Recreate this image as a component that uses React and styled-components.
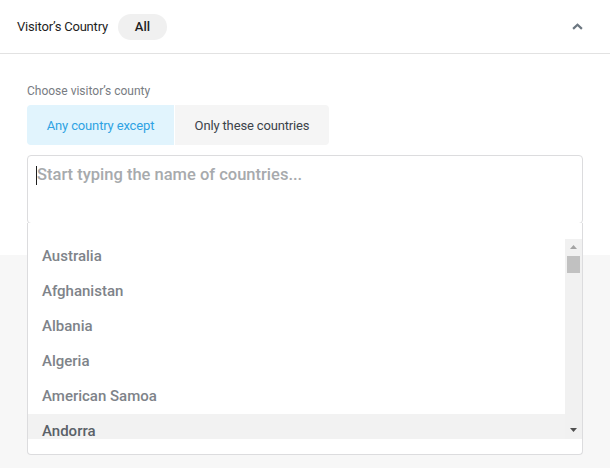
import styled, { createGlobalStyle } from "styled-components";

const GlobalStyle = createGlobalStyle`
    html, body {
        margin: 0;
        padding: 0;
        background: #f7f7f7;
        font-family: Roboto, "Liberation Sans", sans-serif;
    }
`;

const countries = [
    "Australia",
    "Afghanistan",
    "Albania",
    "Algeria",
    "American Samoa",
    "Andorra",
];

const App = () => {
    return (
        <Page>
            <GlobalStyle />
            <Panel>
                <Header>
                    <Title>Visitor’s Country</Title>
                    <Pill>All</Pill>
                    <Chevron viewBox="0 0 10 6">
                        <path d="M1 5.2 L5 1.4 L9 5.2" />
                    </Chevron>
                </Header>
                <Body>
                    <Label>Choose visitor’s county</Label>
                    <Toggle>
                        <ToggleButton $active>Any country except</ToggleButton>
                        <ToggleButton>Only these countries</ToggleButton>
                    </Toggle>
                    <Field>
                        <SearchBox>
                            <Caret />
                            <Placeholder>Start typing the name of countries...</Placeholder>
                        </SearchBox>
                        <Dropdown>
                            <ListRow>
                                <List>
                                    {countries.map((name) => (
                                        <Item key={name} $hovered={name === "Andorra"}>
                                            {name}
                                        </Item>
                                    ))}
                                </List>
                                <Scrollbar>
                                    <Arrow viewBox="0 0 7 4">
                                        <path d="M0 4 L3.5 0 L7 4 Z" />
                                    </Arrow>
                                    <Thumb />
                                    <Track />
                                    <Arrow viewBox="0 0 7 4" $dark>
                                        <path d="M0 0 L7 0 L3.5 4 Z" />
                                    </Arrow>
                                </Scrollbar>
                            </ListRow>
                        </Dropdown>
                    </Field>
                </Body>
            </Panel>
        </Page>
    );
};

export default App;

const Page = styled.div`
    min-height: 468px;
    background: #f7f7f7;
`;

const Panel = styled.div`
    background: #fff;
`;

const Header = styled.div`
    display: flex;
    align-items: center;
    height: 54px;
    padding: 0 27px 0 17px;
    border-bottom: 1px solid #e2e2e2;
    box-sizing: border-box;
`;

const Title = styled.span`
    font-size: 13px;
    font-weight: 400;
    letter-spacing: -0.2px;
    color: #1e1e1e;
`;

const Pill = styled.span`
    display: inline-flex;
    align-items: center;
    justify-content: center;
    height: 26px;
    width: 49px;
    margin-left: 10px;
    border-radius: 13px;
    background: #f0f0f0;
    font-size: 13px;
    font-weight: 500;
    color: #1e1e1e;
`;

const Chevron = styled.svg`
    width: 11px;
    height: 7px;
    margin-left: auto;
    fill: none;
    stroke: #6c7781;
    stroke-width: 2;
`;

const Body = styled.div`
    padding: 29px 27px 31px;
`;

const Label = styled.div`
    font-size: 12px;
    line-height: 16px;
    color: #787c82;
    margin-bottom: 6px;
`;

const Toggle = styled.div`
    display: flex;
    margin-bottom: 10px;
`;

const ToggleButton = styled.div`
    display: flex;
    align-items: center;
    justify-content: center;
    height: 40px;
    white-space: nowrap;
    font-size: 13px;
    font-weight: 400;
    letter-spacing: -0.15px;
    background: ${(p) => (p.$active ? "#e1f4fd" : "#f5f5f5")};
    color: ${(p) => (p.$active ? "#2ea3e3" : "#3c434a")};
    border-radius: ${(p) => (p.$active ? "4px 0 0 4px" : "0 4px 4px 0")};
    margin-right: ${(p) => (p.$active ? "1px" : "0")};
    width: ${(p) => (p.$active ? "147px" : "154px")};
`;

const Field = styled.div`
    position: relative;
`;

const SearchBox = styled.div`
    display: flex;
    align-items: flex-start;
    height: 69px;
    padding: 9px 8px;
    border: 1px solid #dcdcde;
    border-radius: 4px;
    box-sizing: border-box;
`;

const Caret = styled.span`
    width: 1px;
    height: 19px;
    margin-top: 1px;
    background: #1e1e1e;
`;

const Placeholder = styled.span`
    font-size: 16.5px;
    font-weight: 500;
    line-height: 20px;
    color: #a7aaad;
`;

const Dropdown = styled.div`
    position: absolute;
    top: 100%;
    left: 0;
    right: 0;
    margin-top: -1px;
    padding: 16px 0 15px;
    background: #fff;
    border: 1px solid #dcdcde;
    border-top: none;
    border-radius: 0 0 4px 4px;
`;

const ListRow = styled.div`
    display: flex;
    height: 200px;
`;

const List = styled.div`
    flex: 1;
    overflow: hidden;
`;

const Item = styled.div`
    height: 35px;
    box-sizing: border-box;
    padding: 0 14px 2px;
    display: flex;
    align-items: center;
    font-size: 15px;
    font-weight: 500;
    color: ${(p) => (p.$hovered ? "#5a6168" : "#7e8389")};
    background: ${(p) => (p.$hovered ? "#f2f2f2" : "transparent")};
`;

const Scrollbar = styled.div`
    display: flex;
    flex-direction: column;
    align-items: center;
    width: 17px;
    background: #f1f1f1;
`;

const Arrow = styled.svg`
    width: 7px;
    height: 4px;
    margin: 6px 0 7px;
    fill: ${(p) => (p.$dark ? "#505050" : "#a3a3a3")};
`;

const Thumb = styled.div`
    width: 13px;
    height: 17px;
    background: #c1c1c1;
`;

const Track = styled.div`
    flex: 1;
`;
